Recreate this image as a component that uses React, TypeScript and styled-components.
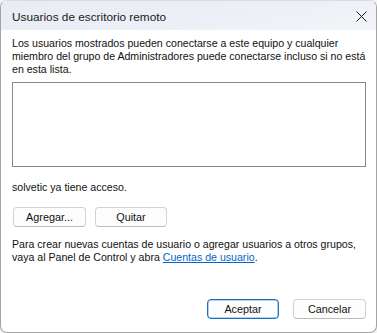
import React from "react";
import styled, { createGlobalStyle } from "styled-components";

const GlobalStyle = createGlobalStyle`
  html, body {
    margin: 0;
    padding: 0;
    background: #f4f4f4;
  }
  * {
    box-sizing: border-box;
  }
`;

const Window = styled.div`
  width: 377px;
  height: 333px;
  display: flex;
  flex-direction: column;
  background: #fff;
  border: 1px solid #a3a3a3;
  border-top-color: #d8dce2;
  border-radius: 7px;
  overflow: hidden;
  font-family: "Liberation Sans", Arial, sans-serif;
  color: #111;
`;

const TitleBar = styled.div`
  height: 29px;
  flex: none;
  display: flex;
  align-items: center;
  justify-content: space-between;
  padding: 0 0 0 11px;
  background: linear-gradient(170deg, #e9edf3 0%, #eceff5 55%, #f3f5f9 100%);
`;

const Title = styled.div`
  font-size: 11.8px;
  color: #1a1a1a;
  padding-top: 2px;
`;

const CloseButton = styled.div`
  width: 30px;
  height: 29px;
  display: flex;
  align-items: center;
  justify-content: center;
  padding: 1px 0 0 0;
`;

const Body = styled.div`
  flex: 1;
  display: flex;
  flex-direction: column;
  padding: 7px 10px 13px 11px;
  font-size: 10.6px;
  line-height: 13px;
`;

const Text = styled.p<{ $gap?: number }>`
  margin: ${(p) => p.$gap ?? 0}px 0 0 0;
  white-space: nowrap;
`;

const ListBox = styled.div`
  margin-top: 6px;
  height: 85px;
  border: 1px solid #848991;
  background: #fff;
`;

const ButtonRow = styled.div<{ $end?: boolean; $gap: number }>`
  display: flex;
  gap: ${(p) => p.$gap}px;
  justify-content: ${(p) => (p.$end ? "flex-end" : "flex-start")};
  margin-top: ${(p) => (p.$end ? "auto" : "13px")};
  padding-left: ${(p) => (p.$end ? 0 : 1)}px;
`;

const Button = styled.button<{ $primary?: boolean; $w: number }>`
  width: ${(p) => p.$w}px;
  height: 20px;
  padding: 0;
  font-family: inherit;
  font-size: 10.8px;
  color: #111;
  background: #fdfdfd;
  border: 1px solid ${(p) => (p.$primary ? "#1a6fc4" : "#d2d2d2")};
  border-bottom-color: ${(p) => (p.$primary ? "#1a6fc4" : "#bdbdbd")};
  border-radius: 4px;
  box-shadow: ${(p) => (p.$primary ? "inset 0 0 0 0.5px #6aa3dc" : "none")};
`;

const Link = styled.a`
  color: #0066cc;
  text-decoration: underline;
`;

const App: React.FC = () => {
  return (
    <>
      <GlobalStyle />
      <Window>
        <TitleBar>
          <Title>Usuarios de escritorio remoto</Title>
          <CloseButton>
            <svg width="11" height="11" viewBox="0 0 11 11">
              <path d="M0.5 0.5 L10.5 10.5 M10.5 0.5 L0.5 10.5" stroke="#1b1b1b" strokeWidth="1" fill="none" />
            </svg>
          </CloseButton>
        </TitleBar>
        <Body>
          <Text>
            Los usuarios mostrados pueden conectarse a este equipo y cualquier
            <br />
            miembro del grupo de Administradores puede conectarse incluso si no está
            <br />
            en esta lista.
          </Text>
          <ListBox />
          <Text $gap={14}>solvetic ya tiene acceso.</Text>
          <ButtonRow $gap={9}>
            <Button $w={73}>Agregar...</Button>
            <Button $w={72}>Quitar</Button>
          </ButtonRow>
          <Text $gap={11}>
            Para crear nuevas cuentas de usuario o agregar usuarios a otros grupos,
            <br />
            vaya al Panel de Control y abra <Link href="#">Cuentas de usuario</Link>.
          </Text>
          <ButtonRow $end $gap={14}>
            <Button $primary $w={72}>
              Aceptar
            </Button>
            <Button $w={73}>Cancelar</Button>
          </ButtonRow>
        </Body>
      </Window>
    </>
  );
};

export default App;
